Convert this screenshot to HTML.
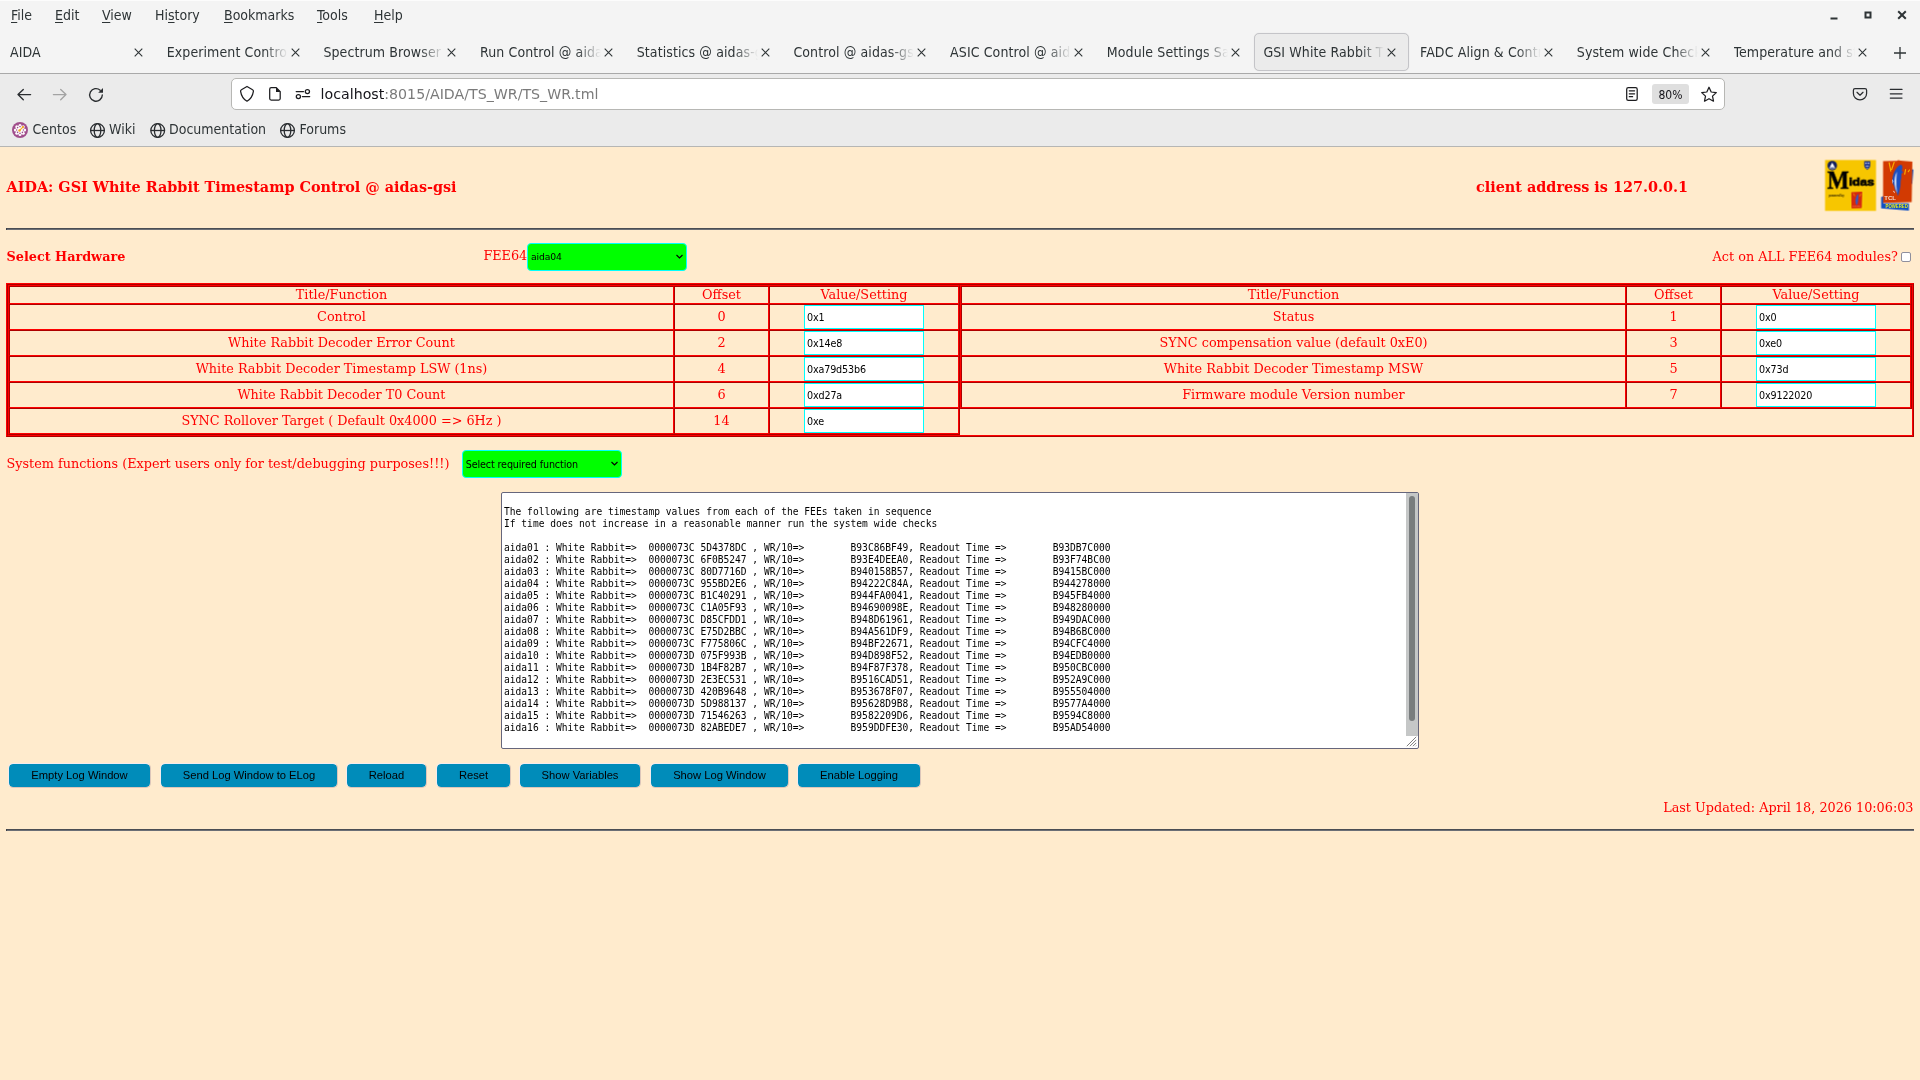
<!DOCTYPE html>
<html lang="en">
<head>
<meta charset="utf-8">
<title>GSI White Rabbit Timestamp Control @ aidas-gsi</title>
<style>
html,body{margin:0;padding:0;}
body{width:1920px;height:1080px;overflow:hidden;background:#ffebcd;position:relative;font-family:"DejaVu Serif","Liberation Serif",serif;}
.abs{position:absolute;}
/* ---------- browser chrome ---------- */
#chrome{position:absolute;left:0;top:0;width:1920px;height:147px;background:#ebebeb;font-family:"DejaVu Sans Condensed","DejaVu Sans","Liberation Sans",sans-serif;font-stretch:condensed;font-size:14px;color:#2e3436;}
#topbar{position:absolute;left:0;top:0;width:1920px;height:72px;background:#f4f4f4;border-top:1px solid #fcfcfc;}
#topline{position:absolute;left:0;top:73px;width:1920px;height:1px;background:#a9a9a9;}
#botline{position:absolute;left:0;top:146px;width:1920px;height:1px;background:#b6b6b4;}
.menu{position:absolute;top:6px;line-height:18px;white-space:nowrap;}
.menu u{text-decoration:underline;text-underline-offset:2px;text-decoration-thickness:1px;}
.tab{position:absolute;top:42.6px;line-height:18px;letter-spacing:0.1px;width:121px;white-space:nowrap;overflow:hidden;}
.tab i{position:absolute;right:0;top:0;width:24px;height:18px;background:linear-gradient(to right,rgba(244,244,244,0),#f4f4f4);}
.tab.act i{background:linear-gradient(to right,rgba(235,235,235,0),#ebebeb);}
#acttab{position:absolute;left:1254px;top:33px;width:153px;height:36px;border:1px solid #c4c4c8;border-radius:5px;background:#ebebeb;box-shadow:0 0 1px rgba(0,0,0,.12);}
#urlbar{position:absolute;left:231px;top:78px;width:1492px;height:30px;border:1px solid #b7b7b4;border-radius:5px;background:#fff;}
#url{position:absolute;left:320.6px;top:84px;line-height:20px;font-family:"DejaVu Sans","Liberation Sans",sans-serif;font-stretch:normal;font-size:14.2px;white-space:nowrap;color:#15141a;}
#url span{color:#7a7a7a;}
.bm{position:absolute;top:120.4px;line-height:18px;white-space:nowrap;}
svg{position:absolute;overflow:visible;}
#zoomb{position:absolute;left:1652px;top:84px;width:37px;height:20px;border-radius:3px;background:#dfdfdf;font-size:12px;line-height:20px;padding-top:1px;height:19px;overflow:hidden;text-align:center;color:#15141a;}
/* ---------- page ---------- */
#page{position:absolute;left:0;top:0;width:1920px;height:1080px;color:#ff0000;font-size:12.8px;}
.t{position:absolute;white-space:nowrap;line-height:16px;}
.b{font-weight:bold;}
.big{font-size:14.4px;line-height:18px;}
.hr{position:absolute;left:6px;width:1908px;height:2px;background:linear-gradient(#4b4d53 0,#4b4d53 50%,#6b6e75 50%,#6b6e75 100%);border-left:1px solid #3d4048;box-sizing:border-box;}
.sel{position:absolute;width:158px;height:26px;border:1px solid #00ffff;border-radius:4px;background:#00ff00;color:#000;font-family:"DejaVu Sans","Liberation Sans",sans-serif;font-size:9.6px;letter-spacing:-0.12px;}
.sel span{position:absolute;top:6.5px;line-height:12px;white-space:nowrap;}
.cb{position:absolute;width:8px;height:8px;border:1px solid #8f8f9d;border-radius:2px;background:#fff;}
.ot{position:absolute;left:6px;top:283px;width:1906px;height:152px;border:1px solid;border-color:#ff0000 #ad0000 #ad0000 #ff0000;}
.oc{position:absolute;left:0;top:0;width:1904px;height:150px;border:1px solid;border-color:#ad0000 #ff0000 #ff0000 #ad0000;}
table.it{position:absolute;top:285px;width:952px;border-collapse:separate;border-spacing:0;table-layout:fixed;border:1px solid;border-color:#ff0000 #ad0000 #ad0000 #ff0000;}
table.it td{border:1px solid;border-color:#ad0000 #ff0000 #ff0000 #ad0000;padding:0;text-align:center;vertical-align:middle;height:23px;padding-bottom:1px;line-height:15px;box-sizing:content-box;white-space:nowrap;}
table.it tr.hd td{height:16px;line-height:16px;padding-bottom:0;}
td.c1{width:663px;} td.c2{width:93px;} td.c3{width:188px;}
.inp{display:block;margin:0 auto;width:116px;height:22px;border:1px solid #00ffff;background:#fff;color:#000;font-family:"DejaVu Sans","Liberation Sans",sans-serif;font-size:9.6px;line-height:24px;height:22px;overflow:hidden;text-align:left;padding-left:2px;letter-spacing:-0.15px;}
#ta{position:absolute;left:501px;top:492px;width:916px;height:255px;border:1px solid #66667c;border-radius:2px;background:#fff;overflow:hidden;}
#ta pre{position:absolute;left:2.0px;top:0.6px;margin:0;font-family:"DejaVu Sans Mono","Liberation Mono",monospace;font-size:9.6px;line-height:12px;color:#000;}
#sbt{position:absolute;left:904px;top:0;width:12px;height:243px;background:#c5c7c7;}
#sbh{position:absolute;left:907px;top:3px;width:6px;height:225px;border-radius:3px;background:#797d7e;}
.btn{position:absolute;top:763px;height:23px;box-sizing:content-box;margin-left:0;border:1px solid;border-color:#f3ebee #dcc6ba #dcc6ba #f3ebee;background-clip:padding-box;border-radius:5px;background-color:#008cba;color:#000;font-family:"Liberation Sans",sans-serif;font-size:11.2px;line-height:22px;text-align:center;white-space:nowrap;}
#midas{position:absolute;left:1825px;top:160px;width:51px;height:51px;background:#f7c600;}
#tcl{position:absolute;left:1881px;top:160px;width:33px;height:51px;}
table.it td.c3{padding-bottom:0;height:24px;} table.it tr.hd td.c3{height:16px;}
#chrome,#page{will-change:transform;}
</style>
</head>
<body>
<div id="chrome">
<div id="topbar"></div>
<div id="topline"></div>
<div id="botline"></div>
<div class="menu" style="left:11px"><u>F</u>ile</div>
<div class="menu" style="left:55px"><u>E</u>dit</div>
<div class="menu" style="left:102px"><u>V</u>iew</div>
<div class="menu" style="left:155px">Hi<u>s</u>tory</div>
<div class="menu" style="left:224px"><u>B</u>ookmarks</div>
<div class="menu" style="left:317px"><u>T</u>ools</div>
<div class="menu" style="left:374px"><u>H</u>elp</div>
<svg style="left:1828px;top:9px" width="12" height="12" viewBox="0 0 12 12"><path d="M2.5 9.5h7" stroke="#2e3436" stroke-width="2" fill="none"/></svg>
<svg style="left:1862px;top:9px" width="12" height="12" viewBox="0 0 12 12"><rect x="3.5" y="3.5" width="5" height="5" stroke="#2e3436" stroke-width="2" fill="none"/></svg>
<svg style="left:1896px;top:9px" width="12" height="12" viewBox="0 0 12 12"><path d="M2.2 2.2l7.6 7.6M9.8 2.2l-7.6 7.6" stroke="#2e3436" stroke-width="2" fill="none"/></svg>
<div id="acttab"></div>
<div class="tab" style="left:10.0px;width:121px">AIDA<i></i></div>
<svg class="tx" style="left:133.0px;top:46.7px" width="11" height="11" viewBox="0 0 11 11"><path d="M1.7 1.7l7.6 7.6M9.3 1.7l-7.6 7.6" stroke="#2e3436" stroke-width="1.1" fill="none"/></svg>
<div class="tab" style="left:166.7px;width:121px">Experiment Control<i></i></div>
<svg class="tx" style="left:289.7px;top:46.7px" width="11" height="11" viewBox="0 0 11 11"><path d="M1.7 1.7l7.6 7.6M9.3 1.7l-7.6 7.6" stroke="#2e3436" stroke-width="1.1" fill="none"/></svg>
<div class="tab" style="left:323.4px;width:121px">Spectrum Browser<i></i></div>
<svg class="tx" style="left:446.4px;top:46.7px" width="11" height="11" viewBox="0 0 11 11"><path d="M1.7 1.7l7.6 7.6M9.3 1.7l-7.6 7.6" stroke="#2e3436" stroke-width="1.1" fill="none"/></svg>
<div class="tab" style="left:480.0px;width:121px">Run Control @ aidas<i></i></div>
<svg class="tx" style="left:603.0px;top:46.7px" width="11" height="11" viewBox="0 0 11 11"><path d="M1.7 1.7l7.6 7.6M9.3 1.7l-7.6 7.6" stroke="#2e3436" stroke-width="1.1" fill="none"/></svg>
<div class="tab" style="left:636.7px;width:121px">Statistics @ aidas-gsi<i></i></div>
<svg class="tx" style="left:759.7px;top:46.7px" width="11" height="11" viewBox="0 0 11 11"><path d="M1.7 1.7l7.6 7.6M9.3 1.7l-7.6 7.6" stroke="#2e3436" stroke-width="1.1" fill="none"/></svg>
<div class="tab" style="left:793.4px;width:121px">Control @ aidas-gsi<i></i></div>
<svg class="tx" style="left:916.4px;top:46.7px" width="11" height="11" viewBox="0 0 11 11"><path d="M1.7 1.7l7.6 7.6M9.3 1.7l-7.6 7.6" stroke="#2e3436" stroke-width="1.1" fill="none"/></svg>
<div class="tab" style="left:950.1px;width:121px">ASIC Control @ aidas<i></i></div>
<svg class="tx" style="left:1073.1px;top:46.7px" width="11" height="11" viewBox="0 0 11 11"><path d="M1.7 1.7l7.6 7.6M9.3 1.7l-7.6 7.6" stroke="#2e3436" stroke-width="1.1" fill="none"/></svg>
<div class="tab" style="left:1106.8px;width:121px">Module Settings Sav<i></i></div>
<svg class="tx" style="left:1229.8px;top:46.7px" width="11" height="11" viewBox="0 0 11 11"><path d="M1.7 1.7l7.6 7.6M9.3 1.7l-7.6 7.6" stroke="#2e3436" stroke-width="1.1" fill="none"/></svg>
<div class="tab act" style="left:1263.4px;width:121px">GSI White Rabbit Ti<i></i></div>
<svg class="tx" style="left:1386.4px;top:46.7px" width="11" height="11" viewBox="0 0 11 11"><path d="M1.7 1.7l7.6 7.6M9.3 1.7l-7.6 7.6" stroke="#2e3436" stroke-width="1.1" fill="none"/></svg>
<div class="tab" style="left:1420.1px;width:121px">FADC Align &amp; Contr<i></i></div>
<svg class="tx" style="left:1543.1px;top:46.7px" width="11" height="11" viewBox="0 0 11 11"><path d="M1.7 1.7l7.6 7.6M9.3 1.7l-7.6 7.6" stroke="#2e3436" stroke-width="1.1" fill="none"/></svg>
<div class="tab" style="left:1576.8px;width:121px">System wide Check<i></i></div>
<svg class="tx" style="left:1699.8px;top:46.7px" width="11" height="11" viewBox="0 0 11 11"><path d="M1.7 1.7l7.6 7.6M9.3 1.7l-7.6 7.6" stroke="#2e3436" stroke-width="1.1" fill="none"/></svg>
<div class="tab" style="left:1733.5px;width:121px">Temperature and st<i></i></div>
<svg class="tx" style="left:1856.5px;top:46.7px" width="11" height="11" viewBox="0 0 11 11"><path d="M1.7 1.7l7.6 7.6M9.3 1.7l-7.6 7.6" stroke="#2e3436" stroke-width="1.1" fill="none"/></svg>
<svg style="left:1892.7px;top:45.7px" width="14" height="14" viewBox="0 0 14 14"><path d="M7 1v12M1 7h12" stroke="#2e3436" stroke-width="1.3" fill="none"/></svg>
<svg style="left:0;top:74px" width="1920" height="72" viewBox="0 74 1920 72" fill="none" stroke="#2a2d30" stroke-width="1.35" stroke-linecap="round" stroke-linejoin="round">
<path d="M30.6 94.6H18.2M23.3 89.4L18 94.6L23.3 99.8"/>
<path d="M53.4 94.6H66M60.7 89.4L66 94.6L60.7 99.8" stroke="#a3a3a3"/>
<path d="M100.2 90.2A6.3 6.3 0 1 0 102.3 95"/>
<path d="M103 87.9V92.7H98.2Z" fill="#2a2d30" stroke="none"/>
</svg>
<div id="urlbar"></div>
<svg style="left:0;top:74px" width="1920" height="72" viewBox="0 74 1920 72" fill="none" stroke="#1c1c1f" stroke-width="1.25" stroke-linecap="round" stroke-linejoin="round">
<path d="M247 86.5L252.6 89.7Q253.6 90.2 253.4 91.3Q252.3 98.2 247 101.2Q241.7 98.2 240.6 91.3Q240.4 90.2 241.4 89.7Z"/>
<path d="M271.2 87.7H276.3L280.2 91.6V98.6Q280.2 100.1 278.7 100.1H271.2Q269.7 100.1 269.7 98.6V89.2Q269.7 87.7 271.2 87.7Z"/>
<path d="M276 87.4L280.5 91.9H276Z" fill="#1c1c1f" stroke="none"/>
<path d="M296.2 91.6H303.5M302.4 96.6H309.7"/>
<circle cx="307.4" cy="91.6" r="2.1"/><circle cx="298.4" cy="96.6" r="2.1"/>
<!-- reader -->
<rect x="1626.7" y="87.7" width="10.5" height="12.6" rx="1.6"/>
<path d="M1629.3 90.8H1634.6M1629.3 93.8H1634.6M1629.3 96.7H1632.6"/>
<!-- star -->
<path d="M1709 87.2L1711.2 92L1716.3 92.6L1712.5 96.1L1713.5 101.2L1709 98.7L1704.5 101.2L1705.5 96.1L1701.7 92.6L1706.8 92Z"/>
<!-- pocket -->
<path d="M1855 88.6H1865Q1866.6 88.6 1866.6 90.2V93.4A6.6 6.6 0 0 1 1853.4 93.4V90.2Q1853.4 88.6 1855 88.6Z" stroke="#2a2d30"/>
<path d="M1857 92.3L1860 95.2L1863 92.3" stroke="#2a2d30"/>
<!-- hamburger -->
<path d="M1890.3 89.4H1902M1890.3 93.8H1902M1890.3 98.1H1902" stroke="#2a2d30"/>
</svg>
<div id="url">localhost<span>:8015/AIDA/TS_WR/TS_WR.tml</span></div>
<div id="zoomb">80%</div>
<!-- bookmarks -->
<svg style="left:12px;top:122px" width="16" height="16" viewBox="0 0 16 16">
<circle cx="8" cy="8" r="8" fill="#a14f8c"/>
<g fill="#fff"><circle cx="8" cy="8" r="4.2"/>
<circle cx="8" cy="3.4" r="1.5"/><circle cx="8" cy="12.6" r="1.5"/><circle cx="3.4" cy="8" r="1.5"/><circle cx="12.6" cy="8" r="1.5"/>
<circle cx="4.75" cy="4.75" r="1.5"/><circle cx="11.25" cy="11.25" r="1.5"/><circle cx="4.75" cy="11.25" r="1.5"/><circle cx="11.25" cy="4.75" r="1.5"/></g>
<g fill="#a14f8c"><circle cx="8" cy="4.6" r=".8"/><circle cx="8" cy="11.4" r=".8"/><circle cx="4.6" cy="8" r=".8"/><circle cx="11.4" cy="8" r=".8"/>
<circle cx="5.6" cy="5.6" r=".8"/><circle cx="10.4" cy="10.4" r=".8"/><circle cx="5.6" cy="10.4" r=".8"/></g>
<path d="M7.6 8.4L11 5" stroke="#efa724" stroke-width="1.1"/><circle cx="7.5" cy="8.5" r="1.25" fill="#efa724"/><path d="M9.6 4.1H11.9V6.4Z" fill="#efa724"/>
</svg>
<svg style="left:0;top:116px" width="400" height="30" viewBox="0 116 400 30" fill="none" stroke="#2a2d30" stroke-width="1.3">
<g id="globe"><circle cx="97.5" cy="130.5" r="6.9"/><ellipse cx="97.5" cy="130.5" rx="3.3" ry="6.9"/><path d="M90.6 130.5H104.4"/></g>
<g transform="translate(60.2 0)"><circle cx="97.5" cy="130.5" r="6.9"/><ellipse cx="97.5" cy="130.5" rx="3.3" ry="6.9"/><path d="M90.6 130.5H104.4"/></g>
<g transform="translate(190 0)"><circle cx="97.5" cy="130.5" r="6.9"/><ellipse cx="97.5" cy="130.5" rx="3.3" ry="6.9"/><path d="M90.6 130.5H104.4"/></g>
</svg>
<div class="bm" style="left:32.5px">Centos</div>
<div class="bm" style="left:109px">Wiki</div>
<div class="bm" style="left:169px">Documentation</div>
<div class="bm" style="left:299.5px">Forums</div>
</div>
<div id="page">
<div class="t b big" style="left:6.5px;top:178px">AIDA: GSI White Rabbit Timestamp Control @ aidas-gsi</div>
<div class="t b big" style="left:1476px;top:178px">client address is 127.0.0.1</div>
<svg style="left:1820px;top:155px" width="100" height="60" viewBox="0 0 1800 1080">
<rect x="90" y="90" width="918" height="916" fill="#f7c600"/>
<circle cx="220" cy="190" r="86" fill="#121f5e"/>
<path d="M220 135L268 222H172Z" fill="#fff"/>
<path d="M165 232Q220 262 275 232" stroke="#dfe6f5" stroke-width="14" fill="none"/>
<path d="M795 112H905V190Q905 240 850 266Q795 240 795 190Z" fill="#1b318c"/>
<path d="M815 135H840V160H815ZM860 135H885V160H860ZM822 190H878V205H822ZM835 225H865V238H835Z" fill="#e8ecf8"/>
<text x="128" y="608" font-family="'Liberation Serif','DejaVu Serif',serif" font-weight="bold" font-size="462" textLength="395" lengthAdjust="spacingAndGlyphs" fill="#000" stroke="#000" stroke-width="8">M</text>
<text x="520" y="555" font-family="'Liberation Sans','DejaVu Sans',sans-serif" font-weight="bold" font-size="196" textLength="455" lengthAdjust="spacingAndGlyphs" fill="#000" stroke="#000" stroke-width="13">idas</text>
<text x="160" y="752" font-family="'Liberation Sans','DejaVu Sans',sans-serif" font-weight="bold" font-size="52" textLength="275" lengthAdjust="spacingAndGlyphs" fill="#1a1400">powered by</text>
<rect x="548" y="645" width="230" height="330" fill="#fbd400"/>
<path d="M562 668L760 660L752 958L566 962Z" fill="#d5290e"/>
<path d="M690 700Q640 740 640 830Q640 890 662 905Q690 860 690 700Z" fill="#2a5ccc"/>
<path d="M600 690L625 740M735 700L715 745" stroke="#f4a300" stroke-width="14"/>
<text x="578" y="925" font-family="'Liberation Sans',sans-serif" font-weight="bold" font-size="44" textLength="150" lengthAdjust="spacingAndGlyphs" fill="#f08a60">TCL/TK</text>
<!-- Tcl powered -->
<path d="M1650 255L1682 262L1660 520L1645 520ZM1100 760L1140 740V870H1600V1000L1100 962Z" fill="#0e4fc4"/>
<path d="M1135 112L1380 104L1410 92L1445 100L1662 120L1650 850L1135 862Z" fill="#d23a02"/>
<path d="M1455 175Q1500 190 1470 290L1500 300Q1490 330 1465 335Q1470 420 1450 470Q1455 560 1430 640Q1420 700 1400 742Q1395 700 1385 680Q1340 640 1335 560Q1290 500 1305 420Q1320 300 1380 230Q1410 190 1455 175Z" fill="#1a4fc4"/>
<path d="M1385 300Q1330 400 1340 520Q1350 610 1390 690Q1370 560 1375 450Q1378 370 1385 300Z" fill="#e9eefc" opacity=".85"/>
<path d="M1300 430L1320 470L1310 520ZM1310 640L1345 660L1340 690Z" fill="#f3f5ff"/>
<path d="M1245 140L1275 290M1335 130L1290 260M1540 265L1525 345M1610 270L1590 300" stroke="#f6a800" stroke-width="22" stroke-linecap="round"/>
<text x="1158" y="818" font-family="'Liberation Sans','DejaVu Sans',sans-serif" font-weight="bold" font-size="92" textLength="210" lengthAdjust="spacingAndGlyphs" fill="#f7ddd0">TCL</text>
<text x="1180" y="950" font-family="'Liberation Sans','DejaVu Sans',sans-serif" font-weight="bold" font-size="88" textLength="400" lengthAdjust="spacingAndGlyphs" fill="#e8ec1a">POWERED</text>
</svg>
<div class="hr" style="top:228px"></div>
<div class="t b" style="left:6.5px;top:249px">Select Hardware</div>
<div class="t" style="left:483.4px;top:247.5px">FEE64</div>
<div class="sel" style="left:527px;top:243px"><span style="left:3px;font-size:9.25px">aida04</span><svg style="left:146.6px;top:10.3px" width="9" height="6" viewBox="0 0 9 6"><path d="M1.5 1L4.5 4L7.5 1" fill="none" stroke="#000" stroke-width="1.15"/></svg></div>
<div class="t" style="left:1712.6px;top:248.5px">Act on ALL FEE64 modules?</div>
<div class="cb" style="left:1901px;top:252px"></div>
<div class="ot"><div class="oc"></div></div>
<table class="it" style="left:8px">
<tr class="hd"><td class="c1">Title/Function</td><td class="c2">Offset</td><td class="c3">Value/Setting</td></tr>
<tr><td class="c1">Control</td><td class="c2">0</td><td class="c3"><span class="inp">0x1</span></td></tr>
<tr><td class="c1">White Rabbit Decoder Error Count</td><td class="c2">2</td><td class="c3"><span class="inp">0x14e8</span></td></tr>
<tr><td class="c1">White Rabbit Decoder Timestamp LSW (1ns)</td><td class="c2">4</td><td class="c3"><span class="inp">0xa79d53b6</span></td></tr>
<tr><td class="c1">White Rabbit Decoder T0 Count</td><td class="c2">6</td><td class="c3"><span class="inp">0xd27a</span></td></tr>
<tr><td class="c1">SYNC Rollover Target ( Default 0x4000 =&gt; 6Hz )</td><td class="c2">14</td><td class="c3"><span class="inp">0xe</span></td></tr>
</table>
<table class="it" style="left:960px">
<tr class="hd"><td class="c1">Title/Function</td><td class="c2">Offset</td><td class="c3">Value/Setting</td></tr>
<tr><td class="c1">Status</td><td class="c2">1</td><td class="c3"><span class="inp">0x0</span></td></tr>
<tr><td class="c1">SYNC compensation value (default 0xE0)</td><td class="c2">3</td><td class="c3"><span class="inp">0xe0</span></td></tr>
<tr><td class="c1">White Rabbit Decoder Timestamp MSW</td><td class="c2">5</td><td class="c3"><span class="inp">0x73d</span></td></tr>
<tr><td class="c1">Firmware module Version number</td><td class="c2">7</td><td class="c3"><span class="inp">0x9122020</span></td></tr>
</table>
<div class="t" style="left:6.5px;top:456px">System functions (Expert users only for test/debugging purposes!!!)</div>
<div class="sel" style="left:462px;top:450px"><span style="left:2.7px;top:8px">Select required function</span><svg style="left:147px;top:10.2px" width="9" height="6" viewBox="0 0 9 6"><path d="M1.5 1L4.5 4L7.5 1" fill="none" stroke="#000" stroke-width="1.15"/></svg></div>
<div id="ta"><pre>

The following are timestamp values from each of the FEEs taken in sequence
If time does not increase in a reasonable manner run the system wide checks

aida01 : White Rabbit=&gt;  0000073C 5D4378DC , WR/10=&gt;        B93C86BF49, Readout Time =&gt;        B93DB7C000
aida02 : White Rabbit=&gt;  0000073C 6F0B5247 , WR/10=&gt;        B93E4DEEA0, Readout Time =&gt;        B93F74BC00
aida03 : White Rabbit=&gt;  0000073C 80D7716D , WR/10=&gt;        B940158B57, Readout Time =&gt;        B9415BC000
aida04 : White Rabbit=&gt;  0000073C 955BD2E6 , WR/10=&gt;        B94222C84A, Readout Time =&gt;        B944278000
aida05 : White Rabbit=&gt;  0000073C B1C40291 , WR/10=&gt;        B944FA0041, Readout Time =&gt;        B945FB4000
aida06 : White Rabbit=&gt;  0000073C C1A05F93 , WR/10=&gt;        B94690098E, Readout Time =&gt;        B948280000
aida07 : White Rabbit=&gt;  0000073C D85CFDD1 , WR/10=&gt;        B948D61961, Readout Time =&gt;        B949DAC000
aida08 : White Rabbit=&gt;  0000073C E75D2BBC , WR/10=&gt;        B94A561DF9, Readout Time =&gt;        B94B6BC000
aida09 : White Rabbit=&gt;  0000073C F775806C , WR/10=&gt;        B94BF22671, Readout Time =&gt;        B94CFC4000
aida10 : White Rabbit=&gt;  0000073D 075F993B , WR/10=&gt;        B94D898F52, Readout Time =&gt;        B94EDB0000
aida11 : White Rabbit=&gt;  0000073D 1B4F82B7 , WR/10=&gt;        B94F87F378, Readout Time =&gt;        B950CBC000
aida12 : White Rabbit=&gt;  0000073D 2E3EC531 , WR/10=&gt;        B9516CAD51, Readout Time =&gt;        B952A9C000
aida13 : White Rabbit=&gt;  0000073D 420B9648 , WR/10=&gt;        B953678F07, Readout Time =&gt;        B955504000
aida14 : White Rabbit=&gt;  0000073D 5D988137 , WR/10=&gt;        B95628D9B8, Readout Time =&gt;        B9577A4000
aida15 : White Rabbit=&gt;  0000073D 71546263 , WR/10=&gt;        B9582209D6, Readout Time =&gt;        B9594C8000
aida16 : White Rabbit=&gt;  0000073D 82ABEDE7 , WR/10=&gt;        B959DDFE30, Readout Time =&gt;        B95AD54000</pre><div id="sbt"></div><div id="sbh"></div><svg style="left:904px;top:243px" width="11" height="11" viewBox="0 0 11 11"><path d="M0.8 10.2L10.2 0.8M3.9 10.2L10.2 3.9M6.9 10.2L10.2 6.9M9.6 10.2L10.2 9.6" stroke="#5c5c5c" stroke-width=".8" fill="none"/></svg></div>
<div class="btn" style="left:8px;width:141px">Empty Log Window</div>
<div class="btn" style="left:160px;width:176px">Send Log Window to ELog</div>
<div class="btn" style="left:346px;width:79px">Reload</div>
<div class="btn" style="left:436px;width:73px">Reset</div>
<div class="btn" style="left:519px;width:120px">Show Variables</div>
<div class="btn" style="left:650px;width:137px">Show Log Window</div>
<div class="btn" style="left:797px;width:122px">Enable Logging</div>
<div class="t" style="right:6.5px;top:799.5px">Last Updated: April 18, 2026 10:06:03</div>
<div class="hr" style="top:829px"></div>
</div>
</body>
</html>
